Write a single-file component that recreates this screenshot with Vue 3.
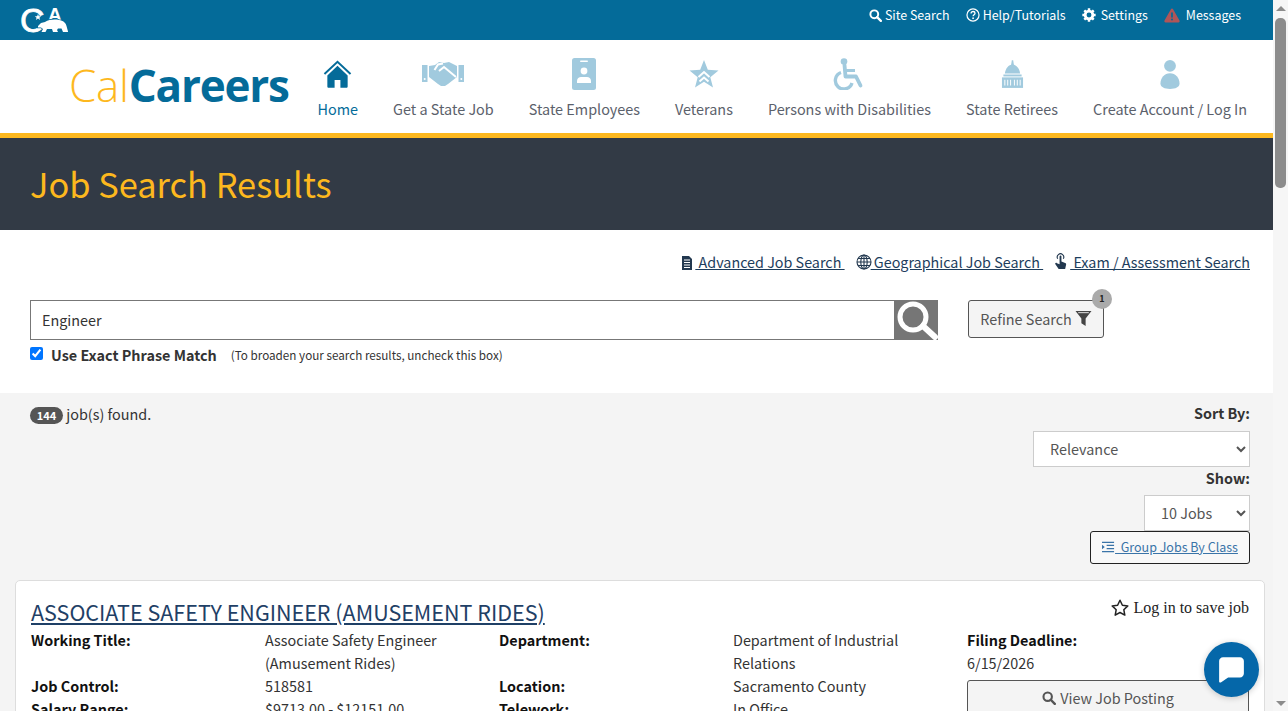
<script setup>
const navItems = [
  { label: 'Home', icon: 'home', active: true },
  { label: 'Get a State Job', icon: 'hands' },
  { label: 'State Employees', icon: 'badge' },
  { label: 'Veterans', icon: 'star' },
  { label: 'Persons with Disabilities', icon: 'chair' },
  { label: 'State Retirees', icon: 'dome' },
  { label: 'Create Account / Log In', icon: 'person' },
]

const details = [
  ['Working Title:', 'Associate Safety Engineer (Amusement Rides)', 'Department:', 'Department of Industrial Relations'],
  ['Job Control:', '518581', 'Location:', 'Sacramento County'],
  ['Salary Range:', '$9713.00 - $12151.00', 'Telework:', 'In Office'],
]
</script>

<template>
  <div class="page">
    <div class="topbar">
      <svg class="ca-logo" viewBox="0 0 48 28" width="48" height="28">
        <text x="-1" y="27" class="ca-c">C</text>
        <text x="27" y="16" class="ca-a">A</text>
        <polygon fill="#fff" transform="translate(1 1)" points="16,8 16.900,10.200 19.200,10.200 17.400,11.700 18.100,14 16,12.600 13.900,14 14.600,11.700 12.800,10.200 15.100,10.200" />
        <path class="ca-bear" d="M17 21l3-3 4-1c4-2.500 10-3 14-2 4 .5 7 3 7.500 6l1.500 5.500v.5h-5l-1.500-3.500H37l-1 1.500 1 2h-5l-1-3h-5l-1.500 3H20.500l1.500-3-2-1.500h-3z" />
      </svg>
      <div class="toplinks">
        <a>
          <svg viewBox="0 0 16 16" width="13" height="13"><circle cx="6.500" cy="6.500" r="4.800" fill="none" stroke="#fff" stroke-width="2.400" /><path d="M10 10l4.600 4.600" stroke="#fff" stroke-width="2.800" stroke-linecap="round" /></svg>
          Site Search
        </a>
        <a>
          <svg viewBox="0 0 16 16" width="14" height="14"><circle cx="8" cy="8" r="6.900" fill="none" stroke="#fff" stroke-width="1.400" /><path d="M5.800 6.200c0-1.400 1-2.200 2.300-2.200s2.200.8 2.200 1.900c0 1.700-2.200 1.700-2.200 3.400" fill="none" stroke="#fff" stroke-width="1.500" /><circle cx="8.100" cy="11.600" r="1" fill="#fff" /></svg>
          Help/Tutorials
        </a>
        <a class="gap-icon">
          <svg class="icon-gear" viewBox="0 0 16 16" width="14" height="14"><circle cx="8" cy="8" r="4.400" fill="none" stroke="#fff" stroke-width="3.200" /><g stroke="#fff" stroke-width="2.800"><path d="M8 .4v3M8 12.600v3M.4 8h3M12.600 8h3M2.600 2.600l2.200 2.200M11.200 11.200l2.200 2.200M2.600 13.400l2.200-2.200M11.200 4.800l2.200-2.200" /></g></svg>
          Settings
        </a>
        <a class="gap-icon">
          <svg viewBox="0 0 16 15" width="16" height="15"><path d="M8 .6c.5 0 .9.3 1.100.7l6.400 11.200c.5.900-.1 1.900-1.100 1.900H1.600c-1 0-1.600-1-1.100-1.900L6.900 1.300C7.100.9 7.500.6 8 .6z" fill="#b05558" /><path d="M8 4.600v5" stroke="#046b99" stroke-width="1.700" /><circle cx="8" cy="11.600" r="1" fill="#046b99" /></svg>
          Messages
        </a>
      </div>
    </div>

    <header class="masthead">
      <div class="brand"><span class="brand-cal">Cal</span><span class="brand-careers">Careers</span></div>
      <nav class="mainnav">
        <a v-for="item in navItems" :key="item.label" class="navitem" :class="{ active: item.active }">
          <span class="navicon">
            <svg v-if="item.icon === 'home'" viewBox="0 0 30 30" width="29" height="29">
              <path d="M1.500 14.500L15 1.800l13.500 12.700" fill="none" stroke="#046b99" stroke-width="2" />
              <path d="M15 6L4.500 16v11.500c0 .8.500 1.300 1.300 1.300h6.200v-8h6v8h6.200c.8 0 1.300-.5 1.300-1.300V16z" fill="#046b99" />
            </svg>
            <svg v-else-if="item.icon === 'hands'" viewBox="0 0 42 26" width="42" height="26">
              <rect x="0" y="4" width="5.500" height="17" fill="#a1cade" />
              <rect x="36.500" y="4" width="5.500" height="17" fill="#a1cade" />
              <circle cx="2.700" cy="18" r="1" fill="#fff" /><circle cx="39.300" cy="18" r="1" fill="#fff" />
              <path d="M7 5l6-1 4-3 5 1 5-1 8 4v11l-9 7-3 2-4 0-3-2-9-7z" fill="#a1cade" />
              <path d="M12.500 9L16 3.500l5-1M17 10l5-4 12 10" fill="none" stroke="#fff" stroke-width="2" />
            </svg>
            <svg v-else-if="item.icon === 'badge'" viewBox="0 0 24 32" width="24" height="32">
              <rect x="0" y="0" width="24" height="32" rx="2.500" fill="#a1cade" />
              <rect x="8" y="2.500" width="8" height="1.600" rx=".8" fill="#fff" />
              <circle cx="12" cy="13" r="3.400" fill="#fff" />
              <path d="M5 25v-2c0-2.600 2-4 4-4h6c2 0 4 1.400 4 4v2z" fill="#fff" />
            </svg>
            <svg v-else-if="item.icon === 'star'" viewBox="0 0 30 29" width="30" height="29">
              <path d="M15 0l3.800 9.800L29.500 10.400l-8.200 6.800L24 27.500 15 21.800 6 27.500l2.700-10.300L.500 10.400l10.700-.6z" fill="#a1cade" />
              <path d="M9.500 17l5.500-5 5.500 5M10.500 21.500l4.500-4 4.500 4" fill="none" stroke="#fff" stroke-width="2" />
            </svg>
            <svg v-else-if="item.icon === 'chair'" viewBox="0 0 32 32" width="32" height="32">
              <circle cx="11" cy="3.500" r="3.300" fill="#a1cade" />
              <path d="M11.500 7l1 11.500H23l4.500 9" fill="none" stroke="#a1cade" stroke-width="3.800" stroke-linejoin="round" stroke-linecap="round" />
              <path d="M12 12.500h10" stroke="#a1cade" stroke-width="3" />
              <path d="M8 14.500a8.500 8.500 0 1 0 11 10.500" fill="none" stroke="#a1cade" stroke-width="3.400" />
            </svg>
            <svg v-else-if="item.icon === 'dome'" viewBox="0 0 24 30" width="23" height="29">
              <path d="M11.300 0h1.400l.8 5h-3z" fill="#a1cade" />
              <path d="M12 4.500c4 0 7.500 4.500 8 9.500H4C4.500 9 8 4.500 12 4.500z" fill="#a1cade" />
              <rect x="2.500" y="15" width="19" height="2" fill="#a1cade" />
              <rect x="1" y="18" width="22" height="11" fill="#a1cade" />
              <path d="M4 20.500v6M7 20.500v6M10 20.500v6M14 20.500v6M17 20.500v6M20 20.500v6" stroke="#fff" stroke-width="1" />
            </svg>
            <svg v-else viewBox="0 0 22 32" width="20" height="31">
              <circle cx="11" cy="6.500" r="6.500" fill="#a1cade" />
              <path d="M11 14.500c6 0 10.500 5 10.500 11.500 0 4-4.500 6-10.500 6S.500 30 .500 26C.500 19.500 5 14.500 11 14.500z" fill="#a1cade" />
            </svg>
          </span>
          <span class="navlabel">{{ item.label }}</span>
        </a>
      </nav>
    </header>

    <div class="banner"><h1>Job Search Results</h1></div>

    <section class="search">
      <div class="searchlinks">
        <a>
          <svg class="icon-doc" viewBox="0 0 12 14" width="12" height="14"><path d="M1 0h7l3 3v11H1z" fill="#22384f" /><path d="M3 4h6M3 6.500h6M3 9h6M3 11.500h6" stroke="#fff" stroke-width="1" /></svg>
          Advanced Job Search&nbsp;
        </a>
        <a>
          <svg class="icon-globe" viewBox="0 0 16 16" width="16" height="16"><g fill="none" stroke="#22384f" stroke-width="1.100"><circle cx="8" cy="8" r="7" /><ellipse cx="8" cy="8" rx="3.200" ry="7" /><path d="M1 8h14M2 4.500h12M2 11.500h12M8 1v14" /></g></svg>
          Geographical Job Search&nbsp;
        </a>
        <a>
          <svg class="icon-hand" viewBox="0 0 14 18" width="13" height="17"><path d="M4 6a3.500 3.500 0 1 1 6 0" fill="none" stroke="#22384f" stroke-width="1.200" /><path d="M6 3.500c0-1.200 2-1.200 2 0V9l4 1.500c1 .4 1.200 1 1 2L12 17H5L1.500 12c-.8-1 .6-2.200 1.600-1.200L6 12z" fill="#22384f" /></svg>
          Exam / Assessment Search
        </a>
      </div>

      <div class="searchrow">
        <div class="searchleft">
          <div class="searchbox">
            <input class="searchinput" type="text" value="Engineer" />
            <button class="searchbtn" aria-label="Search">
              <svg viewBox="0 0 44 40" width="44" height="40"><circle cx="19" cy="17" r="13" fill="none" stroke="#fff" stroke-width="5" /><path d="M29 26l12 11" stroke="#fff" stroke-width="6" stroke-linecap="round" /></svg>
            </button>
          </div>
          <div class="exact">
            <input type="checkbox" checked />
            <label>Use Exact Phrase Match</label>
            <small>(To broaden your search results, uncheck this box)</small>
          </div>
        </div>
        <button class="refine">
          Refine Search
          <svg viewBox="0 0 16 16" width="17" height="17"><path d="M.5 1h15L10 8v7l-4-2.500V8z" fill="#444" /><path d="M3 2.500h10" stroke="#fff" stroke-width=".8" /></svg>
          <span class="refine-count">1</span>
        </button>
      </div>
    </section>

    <main class="results">
      <div class="resulthead">
        <div class="found"><span class="pill">144</span> job(s) found.</div>
        <div class="sorting">
          <label>Sort By:</label>
          <select class="sortselect"><option>Relevance</option></select>
          <label class="showlabel">Show:</label>
          <select class="showselect"><option>10 Jobs</option></select>
          <button class="groupbtn">
            <svg viewBox="0 0 14 12" width="13" height="12"><path d="M0 1h13M5 4.300h8M5 7.700h8M0 11h13" stroke="#3a74a8" stroke-width="1.500" /><path d="M0 3.500L3 6 0 8.500z" fill="#3a74a8" /></svg>
            <span>&nbsp;&nbsp;Group Jobs By Class</span>
          </button>
        </div>
      </div>

      <article class="card">
        <div class="cardtop">
          <a class="jobtitle">ASSOCIATE SAFETY ENGINEER (AMUSEMENT RIDES)</a>
          <span class="savejob">
            <svg viewBox="0 0 18 17" width="18" height="17"><path d="M9 1.200l2.400 5 5.400.7-4 3.800 1 5.400L9 13.500l-4.800 2.600 1-5.400-4-3.800 5.400-.7z" fill="none" stroke="#222" stroke-width="1.500" stroke-linejoin="round" /></svg>
            Log in to save job
          </span>
        </div>
        <div class="cardbody">
          <div class="grid">
            <template v-for="row in details" :key="row[0]">
              <strong>{{ row[0] }}</strong>
              <span>{{ row[1] }}</span>
              <strong>{{ row[2] }}</strong>
              <span>{{ row[3] }}</span>
            </template>
          </div>
          <div class="deadline">
            <strong>Filing Deadline:</strong>
            <span>6/15/2026</span>
            <button class="viewbtn">
              <svg viewBox="0 0 16 16" width="14" height="14"><circle cx="6.500" cy="6.500" r="4.800" fill="none" stroke="#555" stroke-width="2.400" /><path d="M10 10l4.600 4.600" stroke="#555" stroke-width="2.800" stroke-linecap="round" /></svg>
              View Job Posting
            </button>
          </div>
        </div>
      </article>
    </main>

    <button class="chat" aria-label="Chat">
      <svg viewBox="0 0 24 24" width="27" height="27"><path d="M4.500 1h15C21.500 1 23 2.500 23 4.500v11c0 2-1.500 3.500-3.500 3.500H9l-6.500 4.500c-.7.400-1.500 0-1.500-.8V4.500C1 2.500 2.500 1 4.500 1z" fill="#fff" /></svg>
    </button>

    <div class="scrollbar">
      <span class="arrow-up"></span>
      <span class="thumb"></span>
      <span class="arrow-down"></span>
    </div>
  </div>
</template>

<style>
body { margin: 0; }
</style>

<style scoped>
.page {
  width: 1273px;
  font-family: "Noto Sans CJK SC", "Lato", sans-serif;
  font-size: 14.4px;
  color: #212121;
  background: #fff;
}

.topbar {
  height: 40px;
  background: #046b99;
  display: flex;
  justify-content: space-between;
  align-items: flex-start;
  padding: 0 32px 0 21px;
}
.ca-logo { margin-top: 5px; overflow: visible; }
.ca-c { font: 400 34px "Liberation Sans", sans-serif; fill: #fff; stroke: #fff; stroke-width: 0.8px; }
.ca-a { font: 700 19px "Liberation Sans", sans-serif; fill: #fff; }
.ca-bear { fill: #fff; stroke: #046b99; stroke-width: 1.500px; paint-order: stroke; }
.toplinks {
  display: flex;
  gap: 16px;
  color: #fff;
  font-size: 12.450px;
  line-height: 30px;
}
.toplinks a { display: flex; align-items: center; gap: 3px; }
.toplinks a.gap-icon { gap: 6px; }
.icon-gear { margin-right: -1px; }

.masthead {
  height: 93px;
  display: flex;
  justify-content: space-between;
  padding: 0 8.500px 0 69px;
  border-bottom: 5px solid #fdb81e;
}
.brand {
  font-family: "Open Sans", sans-serif;
  font-size: 44px;
  line-height: 44px;
  padding-top: 23px;
  white-space: nowrap;
}
.brand-cal { color: #fdb81e; font-weight: 300; letter-spacing: -0.3px; }
.brand-careers { color: #046b99; font-weight: 700; letter-spacing: -1.2px; }
.mainnav { display: flex; }
.navitem {
  display: flex;
  flex-direction: column;
  align-items: center;
  padding: 0 17.500px;
  color: #5b616b;
  font-size: 14.410px;
}
.navitem.active { color: #046b99; }
.navicon {
  height: 38px;
  margin-top: 15px;
  display: flex;
  align-items: center;
  justify-content: center;
}
.navlabel { margin-top: 5px; line-height: 22px; white-space: nowrap; }

.banner {
  height: 92px;
  background: #323a45;
  display: flex;
  align-items: center;
  padding-left: 30px;
}
.banner h1 {
  margin: -2px 0 0;
  color: #fdb81e;
  font-size: 34.400px;
  font-weight: 400;
  line-height: 46px;
}

.search { height: 163px; padding: 0 23px 0 30px; box-sizing: border-box; }
.searchlinks {
  display: flex;
  justify-content: flex-end;
  gap: 11px;
  padding-top: 21px;
  height: 44px;
  box-sizing: border-box;
  font-size: 14.350px;
  line-height: 22px;
  color: #1d3d5c;
}
.searchlinks a { text-decoration: underline; white-space: nowrap; }
.searchlinks svg { vertical-align: -2px; }
.icon-doc { margin-right: 2px; }
.icon-globe { margin-right: -1px; }
.icon-hand { margin-right: 3px; }
.searchrow { display: flex; gap: 30px; margin-top: 26px; }
.searchleft { width: 908px; }
.searchbox { display: flex; height: 40px; }
.searchinput {
  flex: 1;
  min-width: 0;
  box-sizing: border-box;
  border: 1px solid #777;
  border-right: 0;
  padding: 0 11px 2px;
  font: inherit;
  color: #333;
  outline: 0;
}
.searchbtn { width: 44px; padding: 0; border: 0; background: #767676; }
.searchbtn svg { display: block; }
.exact { display: flex; align-items: center; margin-top: 4px; height: 22px; }
.exact input { margin: -4px 8px 0 0; width: 13px; height: 13px; }
.exact label { font-weight: 700; color: #333; margin-top: -1px; }
.exact small { margin: -1px 0 0 14px; font-size: 11.700px; color: #333; }
.refine {
  position: relative;
  height: 38px;
  width: 136px;
  box-sizing: border-box;
  border: 1px solid #555;
  border-radius: 3px;
  background: #f4f4f4;
  font: inherit;
  color: #555;
  display: flex;
  align-items: center;
  justify-content: center;
  gap: 3px;
  padding: 0 0 2px;
}
.refine-count {
  position: absolute;
  top: -12px;
  right: -9px;
  width: 20px;
  height: 20px;
  border-radius: 50%;
  background: #aaa;
  color: #222;
  font-size: 9px;
  font-weight: 700;
  line-height: 20px;
  text-align: center;
}

.results {
  background: #f4f4f4;
  padding: 0 8px 0 15px;
  min-height: 2300px;
}
.resulthead {
  display: flex;
  justify-content: space-between;
  padding: 10px 15px 0 15px;
  height: 187px;
  box-sizing: border-box;
}
.found { line-height: 22px; color: #333; }
.pill {
  display: inline-block;
  background: #555;
  color: #fff;
  font-size: 11px;
  font-weight: 700;
  line-height: 17px;
  width: 33px;
  text-align: center;
  border-radius: 9px;
}
.sorting { display: flex; flex-direction: column; align-items: flex-end; }
.sorting label { font-weight: 700; color: #333; line-height: 20px; }
.sortselect, .showselect {
  box-sizing: border-box;
  height: 36px;
  margin-top: 8px;
  border: 1px solid #ccc;
  background: #fff;
  color: #555;
  font: inherit;
  padding: 0 12px 2px;
}
.sortselect { width: 217px; }
.showselect { width: 106px; margin-top: 7px; }
.showlabel { margin-top: 1px; }
.groupbtn {
  box-sizing: border-box;
  width: 160px;
  height: 33px;
  padding: 0 0 2px;
  border: 1px solid #222;
  border-radius: 3px;
  background: #f8f8f8;
  font: inherit;
  font-size: 12.500px;
  color: #3a74a8;
  display: flex;
  align-items: center;
  justify-content: center;
}
.groupbtn span { text-decoration: underline; }

.card {
  box-sizing: border-box;
  width: 1250px;
  min-height: 300px;
  background: #fff;
  border: 1px solid #ddd;
  border-radius: 5px;
  padding: 15px 15px 0 15px;
}
.cardtop { display: flex; justify-content: space-between; align-items: center; height: 33px; }
.jobtitle { font-size: 21.500px; line-height: 30px; margin-top: -2px; color: #1f4066; text-decoration: underline; white-space: nowrap; }
.savejob {
  display: flex;
  align-items: center;
  gap: 4px;
  font-family: "Liberation Serif", serif;
  font-size: 16px;
  color: #222;
  margin: -10px 0 0 0;
}
.cardbody { display: flex; line-height: 23px; margin-top: -1px; }
.grid { display: grid; grid-template-columns: 234px 234px 234px 234px; align-content: start; }
.grid > * { padding-right: 30px; }
.cardbody strong { color: #111; }
.grid span, .deadline span { color: #333; }
.deadline { flex: 1; display: flex; flex-direction: column; }
.viewbtn {
  margin-top: 6px;
  height: 38px;
  padding: 0 0 3px;
  border: 1px solid #555;
  border-radius: 3px;
  background: #f4f4f4;
  font: inherit;
  color: #555;
}
.viewbtn svg { vertical-align: -1px; margin-right: 1px; }

.chat {
  position: fixed;
  top: 642px;
  left: 1204px;
  width: 55px;
  height: 55px;
  padding: 0;
  border: 0;
  border-radius: 50%;
  background: #0567a9;
  display: flex;
  align-items: center;
  justify-content: center;
  box-shadow: 0 1px 6px rgba(0, 0, 0, 0.2);
}

.scrollbar {
  position: fixed;
  top: 0;
  bottom: 0;
  right: 0;
  width: 15px;
  background: #f6f6f6;
  display: flex;
  flex-direction: column;
  align-items: center;
}
.thumb {
  width: 11px;
  height: 170px;
  margin-top: 7px;
  background: #8c8c8c;
  border-radius: 5px;
}
.arrow-up, .arrow-down {
  width: 0;
  height: 0;
  border-left: 5px solid transparent;
  border-right: 5px solid transparent;
}
.arrow-up { margin-top: 6px; border-bottom: 5px solid #8c8c8c; }
.arrow-down { margin-top: auto; margin-bottom: 5px; border-top: 5px solid #8c8c8c; }
</style>
